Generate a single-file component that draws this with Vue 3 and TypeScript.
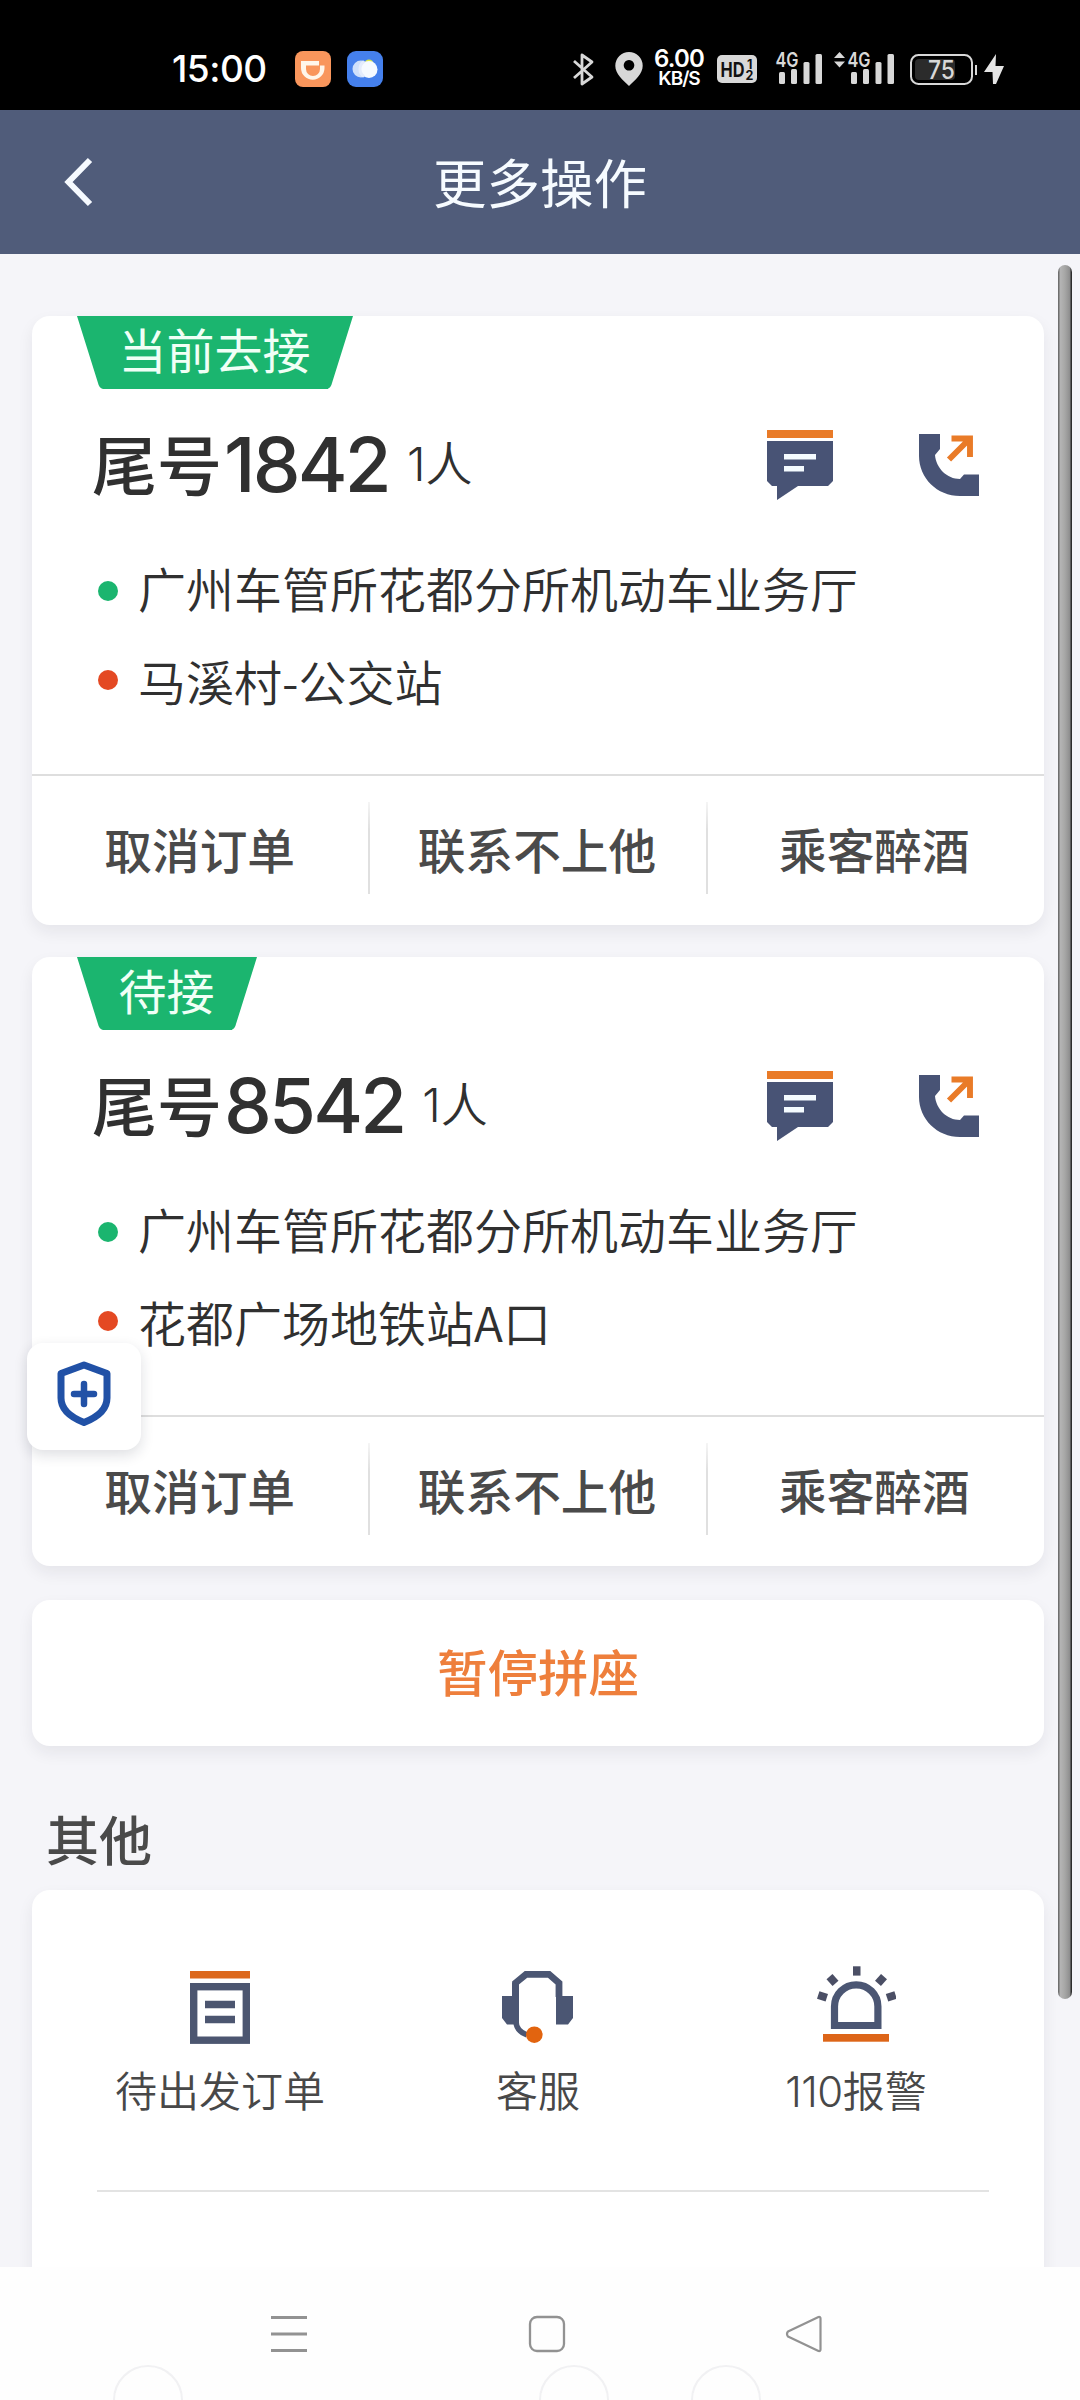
<script setup lang="ts">
interface Order {
  id: number
  status: string
  tail: string
  people: string
  from: string
  to: string
}

const orders: Order[] = [
  { id: 1, status: '当前去接', tail: '1842', people: '1', from: '广州车管所花都分所机动车业务厅', to: '马溪村-公交站' },
  { id: 2, status: '待接', tail: '8542', people: '1', from: '广州车管所花都分所机动车业务厅', to: '花都广场地铁站A口' },
]

const actions: string[] = ['取消订单', '联系不上他', '乘客醉酒']
</script>

<template>
  <div class="screen">
    <header class="status">
      <span class="clock">15:00</span>
      <svg class="app-a" width="36" height="36" viewBox="0 0 36 36">
        <rect width="36" height="36" rx="8" fill="#f9965c" />
        <path d="M6 10H24V14.500H11V18a7 7 0 0 0 14 0V14.500H29.500V17a11.700 11.700 0 0 1-23.500 0Z" fill="#fff6ea" />
      </svg>
      <svg class="app-b" width="36" height="36" viewBox="0 0 36 36">
        <rect width="36" height="36" rx="9" fill="#4580ec" />
        <circle cx="22" cy="13" r="4.500" fill="#dbe94a" />
        <circle cx="14" cy="18" r="8.500" fill="#cfe0fb" />
        <circle cx="22" cy="18.500" r="8.500" fill="#f6faff" />
        <path d="M17 10.500a9 9 0 0 0 0 15" fill="none" stroke="#e4ecfc" stroke-width="3" />
      </svg>
      <svg class="bt" width="24" height="40" viewBox="572 49 24 40">
        <path d="M574 61L592 77L582 84V55L592 62L574 78" fill="none" stroke="#d8d8d8" stroke-width="2.800" stroke-linejoin="round" />
      </svg>
      <svg class="pin" width="30" height="40" viewBox="614 49 30 40">
        <path fill-rule="evenodd" d="M629 52a13.700 13.700 0 0 1 13.700 13.700C642.700 74 635 80 629 86C623 80 615.300 74 615.300 65.700A13.700 13.700 0 0 1 629 52ZM629 60a5.300 5.300 0 1 0 .01 0Z" fill="#d8d8d8" />
      </svg>
      <span class="rate"><b>6.00</b><i>KB/S</i></span>
      <svg class="hd" width="40" height="28" viewBox="0 0 40 28">
        <rect width="40" height="28" rx="5" fill="#d8d8d8" />
        <text x="3.500" y="21.500" font-size="20" font-weight="700" textLength="24" lengthAdjust="spacingAndGlyphs" fill="#111">HD</text>
        <text x="30" y="13.500" font-size="12.500" font-weight="700" fill="#111">1</text>
        <text x="28.500" y="25" font-size="12.500" font-weight="700" fill="#111">2</text>
      </svg>
      <svg class="sig-a" width="48" height="40" viewBox="775 49 48 40" fill="#d8d8d8">
        <text x="775.500" y="67" font-size="20" font-weight="600" textLength="23" lengthAdjust="spacingAndGlyphs">4G</text>
        <rect x="779" y="72" width="6" height="12" rx="1.500" /><rect x="791" y="69" width="6" height="15" rx="1.500" />
        <rect x="803.500" y="62" width="6" height="22" rx="1.500" /><rect x="815.500" y="54" width="6.500" height="30" rx="1.500" />
      </svg>
      <svg class="sig-b" width="62" height="40" viewBox="833 49 62 40" fill="#d8d8d8">
        <path d="M834 58L839.500 52L845 58ZM834 61.500L839.500 67.500L845 61.500Z" />
        <text x="847.500" y="67" font-size="20" font-weight="600" textLength="23" lengthAdjust="spacingAndGlyphs">4G</text>
        <rect x="851" y="72" width="6" height="12" rx="1.500" /><rect x="863" y="69" width="6" height="15" rx="1.500" />
        <rect x="875.500" y="62" width="6" height="22" rx="1.500" /><rect x="887.500" y="54" width="6.500" height="30" rx="1.500" />
      </svg>
      <svg class="battery" width="96" height="40" viewBox="909 49 96 40">
        <rect x="911" y="55" width="61" height="29" rx="7.500" fill="#000" stroke="#d8d8d8" stroke-width="2" />
        <rect x="915" y="59" width="40" height="21" rx="4" fill="#2b2b2b" />
        <path d="M976 65V75" stroke="#d8d8d8" stroke-width="2" />
        <text x="928" y="78.500" font-size="25" font-weight="500" textLength="27" lengthAdjust="spacingAndGlyphs" fill="#d8d8d8">75</text>
        <path d="M996 54L984 72H992.500L993 84H996L1004 66H995.500Z" fill="#e4e4e4" />
      </svg>
    </header>

    <nav class="topbar">
      <svg class="back" width="30" height="52" viewBox="0 0 30 52">
        <path d="M26 4L4.500 26L26 48" fill="none" stroke="#f6faff" stroke-width="6" />
      </svg>
      <h1>更多操作</h1>
    </nav>

    <main class="content">
      <section v-for="o in orders" :key="o.id" class="card order">
        <div class="tag">
          <svg class="tag-end" width="26" height="73" viewBox="0 0 26 73"><path d="M0 0H26V73Q22 72 21 67Z" fill="#1bb56f" /></svg>
          <span>{{ o.status }}</span>
          <svg class="tag-end flip" width="26" height="73" viewBox="0 0 26 73"><path d="M0 0H26V73Q22 72 21 67Z" fill="#1bb56f" /></svg>
        </div>
        <div class="head">
          <h2><span>尾号</span><span class="num">{{ o.tail }}</span></h2>
          <p class="people"><span>{{ o.people }}</span>人</p>
          <svg class="msg" width="66" height="70" viewBox="0 0 66 70">
            <rect y="0" width="66" height="8" fill="#e97b28" />
            <path d="M0 11H66V51L61 56H31L10 70V56H5L0 51Z" fill="#485375" />
            <rect x="17" y="24" width="32" height="5.500" fill="#f4fbff" /><rect x="17" y="36" width="20" height="5.500" fill="#f4fbff" />
          </svg>
          <svg class="phone" width="60" height="62" viewBox="0 0 60 62">
            <path d="M0 0H21V15L16 21C17 34 28 45 41 45L45 40.500H60V62H41C18 62 0 44 0 22Z" fill="#485375" />
            <path d="M32.500 4.500H51V23M50 5.500L30 25.500" fill="none" stroke="#e97b28" stroke-width="5.900" />
          </svg>
        </div>
        <ul class="route">
          <li><i class="dot start"></i><span>{{ o.from }}</span></li>
          <li><i class="dot end"></i><span>{{ o.to }}</span></li>
        </ul>
        <div class="actions">
          <button v-for="a in actions" :key="a">{{ a }}</button>
        </div>
      </section>

      <button class="card pause">暂停拼座</button>

      <h3>其他</h3>
      <section class="card others">
        <div class="tools">
          <div class="tool">
            <svg width="80" height="80" viewBox="180 1965 80 80">
              <rect x="190" y="1971" width="60" height="7.500" fill="#dc671c" />
              <rect x="193.700" y="1986.700" width="52.600" height="53.500" fill="none" stroke="#4c5670" stroke-width="7.400" />
              <path d="M205 2004.500H235M205 2019.500H235" stroke="#4c5670" stroke-width="7.400" />
            </svg>
            <span>待出发订单</span>
          </div>
          <div class="tool">
            <svg width="80" height="80" viewBox="498 1965 80 80">
              <path d="M515.500 1997V1983L526 1974.300H549L559 1983V1997" fill="none" stroke="#4b5673" stroke-width="6.800" />
              <path d="M502 1996H512V1983H519V2024.500H507L502 2018ZM556 1983H562V1996H573V2018L568 2024.500H556Z" fill="#4b5673" />
              <path d="M516 2021Q516 2031 527 2035" fill="none" stroke="#4b5673" stroke-width="5.500" />
              <circle cx="534.300" cy="2034.700" r="8.300" fill="#e2640f" />
            </svg>
            <span>客服</span>
          </div>
          <div class="tool">
            <svg width="80" height="80" viewBox="816 1965 80 80">
              <path d="M834.500 2025.500V2006.500a21.700 21.700 0 0 1 43.400 0V2025.500Z" fill="none" stroke="#4b5673" stroke-width="7.200" />
              <rect x="823" y="2034" width="66" height="7.700" fill="#dd6518" />
              <g fill="#4b4f65">
                <rect x="853" y="1966.300" width="7.500" height="9.300" />
                <rect x="828.500" y="1975.500" width="8" height="9" transform="rotate(-42 832.500 1980)" />
                <rect x="877" y="1975.500" width="8" height="9" transform="rotate(42 881 1980)" />
                <rect x="818" y="1992.500" width="9" height="7.800" transform="rotate(18 822.500 1996.400)" />
                <rect x="886.800" y="1992.500" width="9" height="7.800" transform="rotate(-18 891.300 1996.400)" />
              </g>
            </svg>
            <span><em>110</em>报警</span>
          </div>
        </div>
      </section>

      <div class="scrollbar"></div>
      <button class="guard">
        <svg width="56" height="66" viewBox="0 0 56 66" fill="none" stroke="#2151a6" stroke-linejoin="round">
          <path d="M28 4L51 12.500V37C51 49 42 56 28 61.500C14 56 5 49 5 37V12.500Z" stroke-width="7" />
          <path d="M28 23V43M18 33H38" stroke-width="6.500" stroke-linecap="round" />
        </svg>
      </button>
    </main>

    <footer class="sysnav">
      <svg width="38" height="38" viewBox="0 0 38 38"><path d="M1 2.500H37M1 19H37M1 35.500H37" stroke="#929292" stroke-width="3" /></svg>
      <svg width="38" height="38" viewBox="0 0 38 38"><rect x="2" y="2" width="34" height="34" rx="7" fill="none" stroke="#929292" stroke-width="2.300" /></svg>
      <svg width="38" height="38" viewBox="0 0 38 38"><path d="M33.500 2L3 16.500Q1 19 3 21.500L33.500 36Q35.500 36.500 35.500 34.500V3.500Q35.500 1.500 33.500 2Z" fill="none" stroke="#929292" stroke-width="2.200" stroke-linejoin="round" /></svg>
      <i class="ghost g1"></i><i class="ghost g2"></i><i class="ghost g3"></i>
    </footer>
  </div>
</template>

<style>
body { margin: 0; background: #fff; }
</style>

<style scoped>
.screen {
  width: 1080px;
  height: 2400px;
  overflow: hidden;
  display: flex;
  flex-direction: column;
  background: #f5f5f9;
  color: #303030;
  font-family: "Noto Sans CJK SC", sans-serif;
}
.screen * { box-sizing: border-box; }
svg { display: block; flex: none; }
h1, h2, h3, p, ul { margin: 0; padding: 0; font-weight: 400; }
button { border: 0; padding: 0; background: none; font-family: inherit; color: inherit; }
i, em { font-style: normal; }

.status {
  height: 110px;
  flex: none;
  display: flex;
  align-items: center;
  padding: 28px 0 0 172px;
  background: #000;
  color: #fff;
  font-family: Inter, sans-serif;
}
.clock { width: 123px; font-size: 37px; font-weight: 500; line-height: 40px; letter-spacing: -0.5px; white-space: nowrap; }
.app-b { margin-left: 16px; }
.bt { margin-left: 189px; }
.pin { margin-left: 18px; }
.rate { width: 50px; margin-left: 10px; display: flex; flex-direction: column; align-items: center; }
.rate b { font-size: 24px; font-weight: 600; line-height: 19px; letter-spacing: -0.8px; }
.rate i { font-size: 19px; font-weight: 600; line-height: 21px; letter-spacing: -1px; }
.hd { margin-left: 13px; }
.sig-a { margin-left: 18px; }
.sig-b { margin-left: 10px; }
.battery { margin-left: 14px; }

.topbar {
  height: 144px;
  flex: none;
  display: grid;
  grid-template-columns: 160px 1fr 160px;
  align-items: center;
  background: #505c7a;
  color: #f6fbff;
}
.back { margin: 0 0 0 64px; }
.topbar h1 { font-size: 53.5px; line-height: 80px; padding-bottom: 2px; text-align: center; }

.content { position: relative; height: 2013px; flex: none; overflow: hidden; padding: 62px 36px 0 32px; }
.card { display: block; width: 1012px; border-radius: 18px; background: #fff; box-shadow: 0 7px 16px rgba(30, 30, 40, 0.07); }
.order { height: 609px; margin-bottom: 32px; display: flex; flex-direction: column; }
.tag { height: 73px; flex: none; display: flex; align-self: flex-start; margin-left: 45px; }
.tag span { padding: 0 17px 0 16px; height: 73px; background: #1bb56f; color: #f0fff6; font-size: 48px; line-height: 64px; white-space: nowrap; margin: 0 -0.5px; }
.flip { transform: scaleX(-1); }
.head { height: 150px; flex: none; display: flex; align-items: center; padding-left: 60px; }
.head h2 { display: flex; align-items: center; height: 90px; font-size: 65px; font-weight: 500; line-height: 90px; color: #303030; white-space: nowrap; }
.head h2 span:first-child { padding-bottom: 5px; }
.num { margin-left: 2px; padding-bottom: 1px; font-family: Inter, sans-serif; font-size: 76px; font-weight: 500; letter-spacing: -2.8px; }
.people { margin-left: 18px; padding-bottom: 3px; font-size: 47px; font-weight: 350; line-height: 80px; white-space: nowrap; }
.people span { font-family: Inter, sans-serif; font-weight: 300; }
.msg { margin-left: auto; margin-top: 1px; }
.phone { margin: 2px 65px 0 86px; }
.route { height: 235px; flex: none; list-style: none; padding: 4px 0 0 66px; }
.route li { display: flex; align-items: center; height: 93px; font-size: 48px; font-weight: 350; line-height: 88px; white-space: nowrap; }
.route li span { padding-bottom: 6px; }
.dot { width: 20px; height: 20px; flex: none; margin-right: 20px; border-radius: 50%; }
.start { background: #1bb56f; margin-top: 2px; }
.end { background: #e44923; margin-top: -5px; }
.actions { flex: 1; display: grid; grid-template-columns: repeat(3, 1fr); border-top: 2px solid #dedede; }
.actions button { position: relative; font-size: 47.7px; font-weight: 500; color: #4a4a4a; padding: 0 2px 4px 0; }
.actions button + button::before { content: ""; position: absolute; left: -1px; top: 26px; width: 2px; height: 92px; background: linear-gradient(#f5f5f5, #e0e0e0 30%); }
.pause { height: 146px; margin-top: 34px; padding-bottom: 7px; font-size: 50.5px; font-weight: 500; color: #ee7f3c; }
h3 { margin: 48px 0 0 14px; height: 96px; font-size: 53px; font-weight: 500; line-height: 89px; color: #4a4a4a; }
.others { height: 460px; padding: 0 29px; }
.tools { display: grid; grid-template-columns: repeat(3, 1fr); height: 302px; padding-top: 75px; background: linear-gradient(#e3e3e3, #e3e3e3) 36px 100% / 892px 2px no-repeat; }
.tool { display: flex; flex-direction: column; align-items: center; }
.tool span { margin-top: 12px; font-size: 42px; font-weight: 350; line-height: 64px; color: #484848; white-space: nowrap; }
.tool em { font-family: Inter, sans-serif; font-weight: 300; letter-spacing: -0.5px; }

.scrollbar { position: absolute; left: 1058px; top: 11px; width: 14px; height: 1734px; border-radius: 7px; background: linear-gradient(90deg, #5e5e5e, #b4b4b4 18%, #a6a6a5 50%, #909090 82%, #151515); }
.guard { position: absolute; left: 27px; top: 1089px; width: 114px; height: 107px; padding-bottom: 6px; border-radius: 16px; background: #fff; display: flex; align-items: center; justify-content: center; box-shadow: 0 5px 14px rgba(20, 30, 50, 0.14); }

.sysnav { position: relative; flex: 1; display: flex; justify-content: space-between; overflow: hidden; padding: 48px 257px 0 270px; background: #fefefe; }
.ghost { position: absolute; top: 98px; width: 70px; height: 70px; border-radius: 50%; border: 2px solid #f1f1f3; }
.g1 { left: 113px; }
.g2 { left: 539px; }
.g3 { left: 691px; }
</style>
